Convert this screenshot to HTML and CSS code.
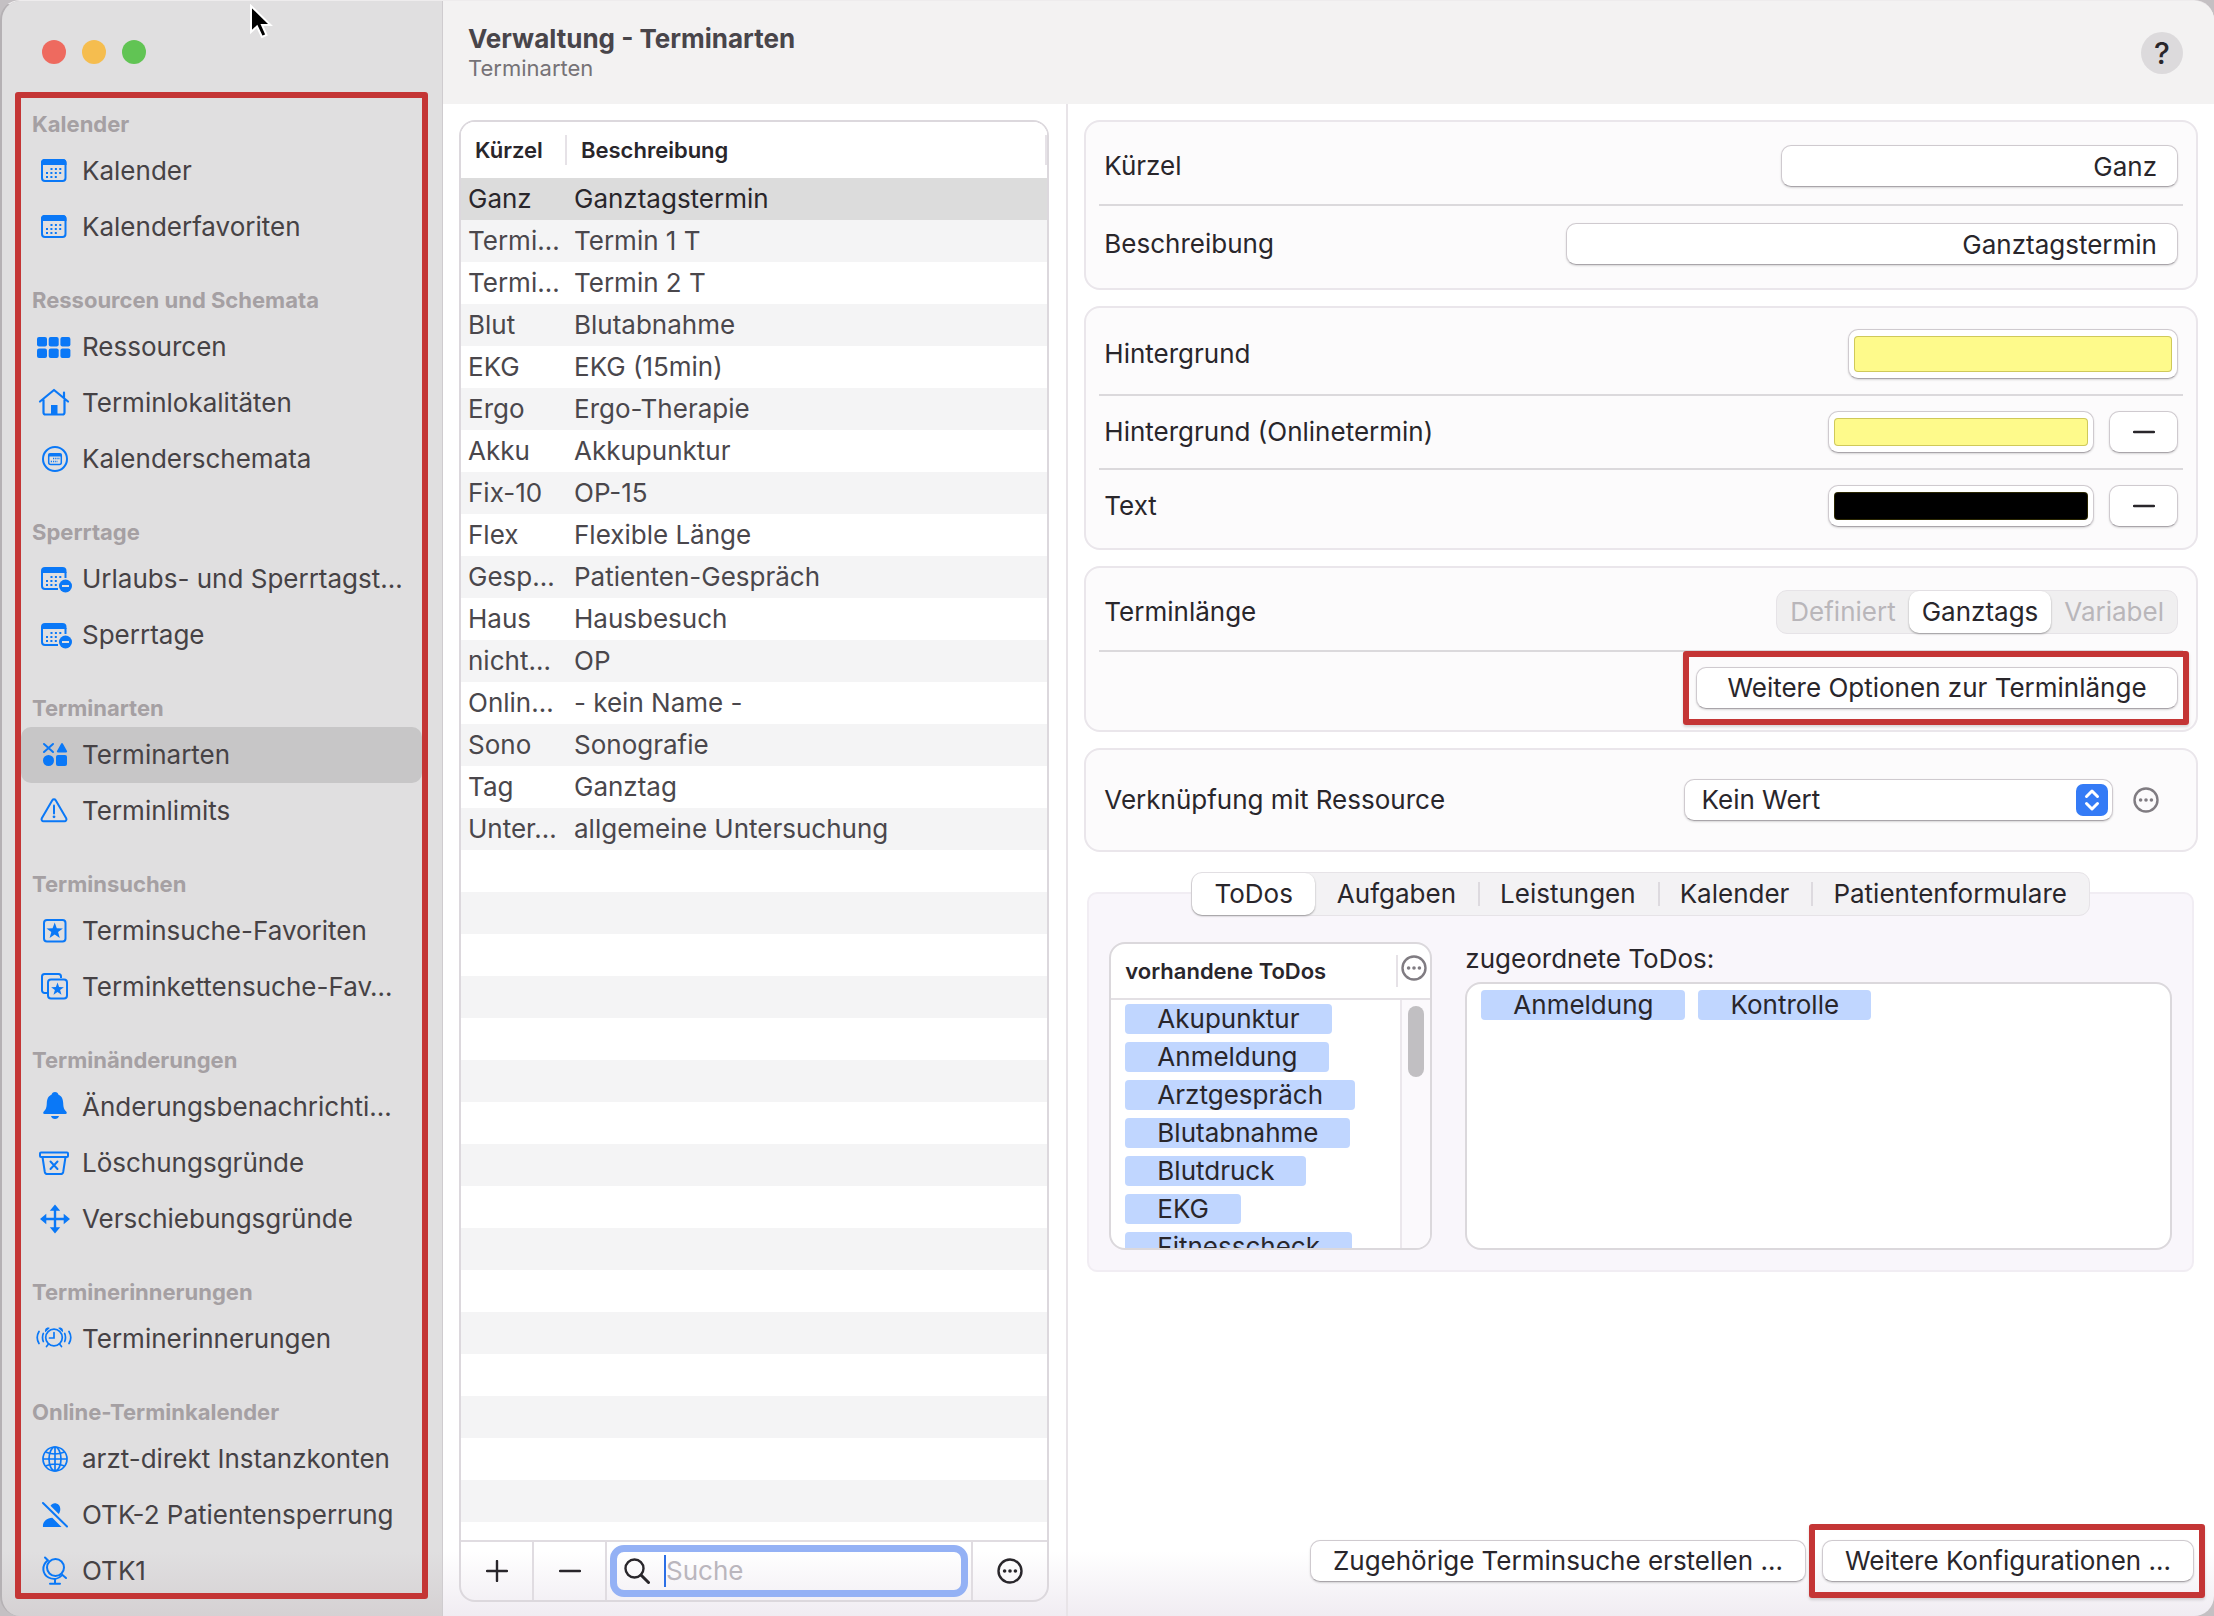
FILE: index.html
```
<!DOCTYPE html>
<html lang="de">
<head>
  <meta charset="UTF-8" />
  <meta name="viewport" content="width=device-width, initial-scale=1.0" />
  <title>Verwaltung - Terminarten</title>
  <link rel="stylesheet" href="styles.css">
</head>
<body>

  <!-- Icons -->
  <svg class="sprite" aria-hidden="true">
    <symbol id="i-dots" viewBox="0 0 26 26">
      <circle cx="13" cy="13" r="11.5" fill="none" stroke="currentColor" stroke-width="2.4"/>
      <g fill="currentColor"><circle cx="7.6" cy="13" r="1.8"/><circle cx="13" cy="13" r="1.8"/><circle cx="18.4" cy="13" r="1.8"/></g>
    </symbol>
    <symbol id="i-minus" viewBox="0 0 22 22">
      <path d="M1 11h20" stroke="currentColor" stroke-width="2.4" stroke-linecap="round"/>
    </symbol>
    <symbol id="i-plus" viewBox="0 0 22 22">
      <path d="M1 11h20M11 1v20" stroke="currentColor" stroke-width="2.4" stroke-linecap="round"/>
    </symbol>
    <symbol id="i-cal" viewBox="0 0 36 30">
      <rect x="6" y="4" width="23.500" height="21" rx="3" fill="none" stroke="currentColor" stroke-width="2"/>
      <path d="M5 9V7a4 4 0 0 1 4-4h17.500a4 4 0 0 1 4 4v2z" fill="currentColor"/>
      <path d="M14.500 13h12M10 17h17M10 21h12" stroke="currentColor" stroke-width="2" stroke-dasharray="2 2.400"/>
    </symbol>
    <symbol id="i-cal-minus" viewBox="0 0 36 30">
      <path d="M22 25H9a3 3 0 0 1-3-3V8M29.500 8v6" fill="none" stroke="currentColor" stroke-width="2"/>
      <path d="M5 9V7a4 4 0 0 1 4-4h17.500a4 4 0 0 1 4 4v2z" fill="currentColor"/>
      <path d="M14.500 13h12M10 17h12M10 21h12" stroke="currentColor" stroke-width="2" stroke-dasharray="2 2.400"/>
      <circle cx="29.500" cy="22" r="6.500" fill="currentColor"/>
      <path d="M26 22h7" stroke="#e0dfe0" stroke-width="2"/>
    </symbol>
    <symbol id="i-grid" viewBox="0 0 36 30">
      <g fill="currentColor">
        <rect x="1" y="5" width="10" height="9.500" rx="2"/><rect x="12.700" y="5" width="10" height="9.500" rx="2"/><rect x="24.400" y="5" width="10" height="9.500" rx="2"/>
        <rect x="1" y="16.500" width="10" height="9.500" rx="2"/><rect x="12.700" y="16.500" width="10" height="9.500" rx="2"/><rect x="24.400" y="16.500" width="10" height="9.500" rx="2"/>
      </g>
    </symbol>
    <symbol id="i-house" viewBox="0 0 36 30">
      <path d="M4 13.500L18 2l14 11.500M28 10V4.500M7.500 12v12.500a2 2 0 0 0 2 2h17a2 2 0 0 0 2-2V12" fill="none" stroke="currentColor" stroke-width="2.200" stroke-linecap="round" stroke-linejoin="round"/>
      <path d="M15 17h6.500v9.500H15z" fill="currentColor"/>
    </symbol>
    <symbol id="i-cal-circle" viewBox="0 0 36 30">
      <circle cx="19" cy="15" r="12" fill="none" stroke="currentColor" stroke-width="2"/>
      <rect x="12.700" y="9.700" width="12.600" height="10.800" rx="2" fill="none" stroke="currentColor" stroke-width="1.500"/>
      <path d="M12.500 11h13" stroke="currentColor" stroke-width="3"/>
      <path d="M17 14.500h7M14.800 17.500h7" stroke="currentColor" stroke-width="1.600" stroke-dasharray="1.200 1"/>
    </symbol>
    <symbol id="i-shapes" viewBox="0 0 36 30">
      <path d="M8 4l9 8M17 4l-9 8" stroke="currentColor" stroke-width="2" stroke-linecap="round"/>
      <g fill="currentColor">
        <path d="M25.200 3.500a1 1 0 0 1 1.600 0l4.200 7.500a1 1 0 0 1-1 1.500h-8a1 1 0 0 1-1-1.500z"/>
        <circle cx="12.500" cy="20.500" r="5.500"/>
        <rect x="20" y="15" width="11" height="11" rx="2"/>
      </g>
    </symbol>
    <symbol id="i-warn" viewBox="0 0 36 30">
      <path d="M16.300 4.200a2 2 0 0 1 3.400 0l10.500 18a2 2 0 0 1-1.700 3h-21a2 2 0 0 1-1.700-3z" fill="none" stroke="currentColor" stroke-width="2"/>
      <path d="M18 9.500v8" stroke="currentColor" stroke-width="2" stroke-linecap="round"/>
      <circle cx="18" cy="20.800" r="1.400" fill="currentColor"/>
    </symbol>
    <symbol id="i-star" viewBox="0 0 36 30">
      <rect x="8" y="4" width="21.500" height="21.500" rx="3" fill="none" stroke="currentColor" stroke-width="2"/>
      <path d="M18.700 6.500l2.100 5.700 6.100.2-4.800 3.700 1.700 5.900-5.100-3.500-5.100 3.500 1.700-5.900-4.800-3.700 6.100-.2z" fill="currentColor"/>
    </symbol>
    <symbol id="i-stars" viewBox="0 0 36 30">
      <path d="M11 21H8.500a2.500 2.500 0 0 1-2.500-2.500v-14A2.500 2.500 0 0 1 8.500 2h14A2.500 2.500 0 0 1 25 4.500V6" fill="none" stroke="currentColor" stroke-width="2"/>
      <rect x="12" y="7.500" width="19" height="19" rx="3" fill="none" stroke="currentColor" stroke-width="2"/>
      <path d="M21.500 10.500l1.600 4.500 4.800.2-3.800 2.900 1.400 4.600-4-2.700-4 2.700 1.400-4.600-3.800-2.900 4.800-.2z" fill="currentColor"/>
    </symbol>
    <symbol id="i-bell" viewBox="0 0 36 30">
      <path d="M19 0c2 0 3 1 3.300 2.500 3.500 1.500 4.700 4.500 4.900 8.500.2 5 1 6.500 3 8.500.8.800 1 2.500-.7 2.500h-21c-1.700 0-1.500-1.700-.7-2.500 2-2 2.800-3.500 3-8.500.2-4 1.400-7 4.900-8.500C16 1 17 0 19 0zM15 24h8c-.5 2-2 3-4 3s-3.500-1-4-3z" fill="currentColor"/>
    </symbol>
    <symbol id="i-bin" viewBox="0 0 36 30">
      <path d="M5 4.500h26a1 1 0 0 1 1 1v2.500a1 1 0 0 1-1 1H5a1 1 0 0 1-1-1V5.500a1 1 0 0 1 1-1zM6.500 9l2.300 15a2.500 2.500 0 0 0 2.500 2h13.400a2.500 2.500 0 0 0 2.500-2L29.500 9" fill="none" stroke="currentColor" stroke-width="2"/>
      <path d="M14.500 13.500l7 7.500M21.500 13.500l-7 7.500" stroke="currentColor" stroke-width="2" stroke-linecap="round"/>
    </symbol>
    <symbol id="i-move" viewBox="0 0 36 30">
      <path d="M19 4v22M8 15h22" stroke="currentColor" stroke-width="2.400"/>
      <path d="M19 .5l5.200 6.300H13.800zM19 29.500l5.200-6.300H13.800zM4 15l6.300-5.200v10.400zM34 15l-6.300-5.200v10.400z" fill="currentColor"/>
    </symbol>
    <symbol id="i-alarm" viewBox="0 0 36 30">
      <g fill="none" stroke="currentColor" stroke-width="1.700" stroke-linecap="round">
        <circle cx="18" cy="13.500" r="8.300"/>
        <path d="M18 8.500v5.500h-4.500M12.500 20l-2 2.500M23.500 20l2 2.500"/>
        <path d="M7.300 9.500q-1.600 4 0 8M3 7.500q-3.600 6 0 12M28.700 9.500q1.600 4 0 8M33 7.500q3.600 6 0 12"/>
      </g>
      <path d="M9.300 8.300c-1.300-3 1.300-5.800 4.500-4.400zM26.700 8.300c1.300-3-1.300-5.800-4.500-4.400z" fill="currentColor"/>
    </symbol>
    <symbol id="i-globe" viewBox="0 0 36 30">
      <g fill="none" stroke="currentColor" stroke-width="1.700">
        <circle cx="19" cy="15" r="12"/><ellipse cx="19" cy="15" rx="6" ry="12"/>
        <path d="M19 3v24M7 15h24M9.500 8q9.500 4 19 0M9.500 22q9.500-4 19 0"/>
      </g>
    </symbol>
    <symbol id="i-user-off" viewBox="0 0 36 30">
      <path d="M14.500 5.800c2.500-4.600 9.800-2.800 9.800 3.200 0 2-.6 3.600-1.600 5zM7 27c-.7-5 3.500-9 9.300-9.300L25.500 27z" fill="currentColor"/>
      <path d="M7 3l24 23.500" stroke="currentColor" stroke-width="2" stroke-linecap="round"/>
    </symbol>
    <symbol id="i-globe-desk" viewBox="0 0 36 30">
      <g fill="none" stroke="currentColor" stroke-width="2" stroke-linecap="round">
        <circle cx="19.500" cy="11.500" r="8.500"/>
        <path d="M9 1.500l2.800 2.800C5 10 6.500 18 12.500 21.500c4.500 2.500 10 1.500 13.800-2.700L30 22M19 23v4M14 27.800h10"/>
      </g>
    </symbol>
  </svg>

  <div class="window">

    <!-- Seitenleiste -->
    <aside class="sidebar">
      <div class="traffic">
        <span class="light red"></span>
        <span class="light yellow"></span>
        <span class="light green"></span>
      </div>
      <nav class="nav">
        <h2>Kalender</h2>
        <a href="#"><svg><use href="#i-cal"/></svg>Kalender</a>
        <a href="#"><svg><use href="#i-cal"/></svg>Kalenderfavoriten</a>
        <h2>Ressourcen und Schemata</h2>
        <a href="#"><svg><use href="#i-grid"/></svg>Ressourcen</a>
        <a href="#"><svg><use href="#i-house"/></svg>Terminlokalitäten</a>
        <a href="#"><svg><use href="#i-cal-circle"/></svg>Kalenderschemata</a>
        <h2>Sperrtage</h2>
        <a href="#"><svg><use href="#i-cal-minus"/></svg>Urlaubs- und Sperrtagst…</a>
        <a href="#"><svg><use href="#i-cal-minus"/></svg>Sperrtage</a>
        <h2>Terminarten</h2>
        <a href="#" class="active"><svg><use href="#i-shapes"/></svg>Terminarten</a>
        <a href="#"><svg><use href="#i-warn"/></svg>Terminlimits</a>
        <h2>Terminsuchen</h2>
        <a href="#"><svg><use href="#i-star"/></svg>Terminsuche-Favoriten</a>
        <a href="#"><svg><use href="#i-stars"/></svg>Terminkettensuche-Fav…</a>
        <h2>Terminänderungen</h2>
        <a href="#"><svg><use href="#i-bell"/></svg>Änderungsbenachrichti…</a>
        <a href="#"><svg><use href="#i-bin"/></svg>Löschungsgründe</a>
        <a href="#"><svg><use href="#i-move"/></svg>Verschiebungsgründe</a>
        <h2>Terminerinnerungen</h2>
        <a href="#"><svg><use href="#i-alarm"/></svg>Terminerinnerungen</a>
        <h2>Online-Terminkalender</h2>
        <a href="#"><svg><use href="#i-globe"/></svg>arzt-direkt Instanzkonten</a>
        <a href="#"><svg><use href="#i-user-off"/></svg>OTK-2 Patientensperrung</a>
        <a href="#"><svg><use href="#i-globe-desk"/></svg>OTK1</a>
      </nav>
    </aside>

    <main class="main">
      <header class="titlebar">
        <div>
          <h1>Verwaltung - Terminarten</h1>
          <p>Terminarten</p>
        </div>
        <button class="help">?</button>
      </header>

      <div class="content">

        <!-- Liste -->
        <section class="list">
          <div class="list-box">
            <div class="rows">
              <table>
                <thead>
                  <tr><th class="col-short"><span>Kürzel</span></th><th><span>Beschreibung</span></th></tr>
                </thead>
                <tbody>
                  <tr class="selected"><td>Ganz</td><td>Ganztagstermin</td></tr>
                  <tr><td>Termi…</td><td>Termin 1 T</td></tr>
                  <tr><td>Termi…</td><td>Termin 2 T</td></tr>
                  <tr><td>Blut</td><td>Blutabnahme</td></tr>
                  <tr><td>EKG</td><td>EKG (15min)</td></tr>
                  <tr><td>Ergo</td><td>Ergo-Therapie</td></tr>
                  <tr><td>Akku</td><td>Akkupunktur</td></tr>
                  <tr><td>Fix-10</td><td>OP-15</td></tr>
                  <tr><td>Flex</td><td>Flexible Länge</td></tr>
                  <tr><td>Gesp…</td><td>Patienten-Gespräch</td></tr>
                  <tr><td>Haus</td><td>Hausbesuch</td></tr>
                  <tr><td>nicht…</td><td>OP</td></tr>
                  <tr><td>Onlin…</td><td>- kein Name -</td></tr>
                  <tr><td>Sono</td><td>Sonografie</td></tr>
                  <tr><td>Tag</td><td>Ganztag</td></tr>
                  <tr><td>Unter…</td><td>allgemeine Untersuchung</td></tr>
                </tbody>
              </table>
            </div>
            <div class="list-footer">
              <button aria-label="Hinzufügen"><svg class="sign"><use href="#i-plus"/></svg></button>
              <button aria-label="Entfernen"><svg class="sign"><use href="#i-minus"/></svg></button>
              <label class="search">
                <svg class="lens" viewBox="0 0 26 26"><circle cx="10.500" cy="10.500" r="9" fill="none" stroke="currentColor" stroke-width="2.400"/><path d="M17 17l7.500 7.500" stroke="currentColor" stroke-width="3" stroke-linecap="round"/></svg>
                <span class="caret"></span>
                <input type="text" placeholder="Suche" aria-label="Suche">
              </label>
              <button class="more" aria-label="Mehr"><svg class="dots"><use href="#i-dots"/></svg></button>
            </div>
          </div>
        </section>

        <!-- Details -->
        <section class="detail">
          <div class="card">
            <div class="row">
              <label for="kuerzel">Kürzel</label>
              <input type="text" id="kuerzel" class="field short" value="Ganz">
            </div>
            <div class="row">
              <label for="beschreibung">Beschreibung</label>
              <input type="text" id="beschreibung" class="field long" value="Ganztagstermin">
            </div>
          </div>

          <div class="card">
            <div class="row tight">
              <label for="bg">Hintergrund</label>
              <input type="color" id="bg" class="color big" value="#fefa8b">
            </div>
            <div class="row tight">
              <label for="bgOnline">Hintergrund (Onlinetermin)</label>
              <input type="color" id="bgOnline" class="color" value="#fefa8b">
              <button class="btn clear" aria-label="Farbe entfernen"><svg class="sign"><use href="#i-minus"/></svg></button>
            </div>
            <div class="row tight">
              <label for="textColor">Text</label>
              <input type="color" id="textColor" class="color" value="#000000">
              <button class="btn clear" aria-label="Farbe entfernen"><svg class="sign"><use href="#i-minus"/></svg></button>
            </div>
          </div>

          <div class="card">
            <div class="row seg-row">
              <span class="row-label">Terminlänge</span>
              <div class="segments">
                <button disabled>Definiert</button>
                <button class="on">Ganztags</button>
                <button disabled>Variabel</button>
              </div>
            </div>
            <div class="row tight end">
              <button class="btn wide marked">Weitere Optionen zur Terminlänge</button>
            </div>
          </div>

          <div class="card">
            <div class="row tall">
              <label for="ressource">Verknüpfung mit Ressource</label>
              <div class="select">
                <select id="ressource"><option>Kein Wert</option></select>
                <svg viewBox="0 0 32 32"><rect width="32" height="32" rx="7" fill="#347bf6"/><path d="M10.500 12.500L16 7l5.500 5.500M10.500 19.500L16 25l5.500-5.500" fill="none" stroke="#fff" stroke-width="3" stroke-linecap="round" stroke-linejoin="round"/></svg>
              </div>
              <button class="more-btn" aria-label="Mehr"><svg class="dots"><use href="#i-dots"/></svg></button>
            </div>
          </div>

          <div class="tab-group">
            <div class="tabs" role="tablist">
              <button role="tab" class="on">ToDos</button>
              <button role="tab">Aufgaben</button>
              <button role="tab">Leistungen</button>
              <button role="tab">Kalender</button>
              <button role="tab">Patientenformulare</button>
            </div>
            <div class="tab-panel">
              <div class="todo-list">
                <div class="todo-head">
                  <h3>vorhandene ToDos</h3>
                  <button class="more-btn" aria-label="Mehr"><svg class="dots"><use href="#i-dots"/></svg></button>
                </div>
                <div class="todo-body">
                  <ul>
                    <li>Akupunktur</li>
                    <li>Anmeldung</li>
                    <li>Arztgespräch</li>
                    <li>Blutabnahme</li>
                    <li>Blutdruck</li>
                    <li>EKG</li>
                    <li>Fitnesscheck</li>
                  </ul>
                  <div class="scroll"><span></span></div>
                </div>
              </div>
              <div class="assigned">
                <p>zugeordnete ToDos:</p>
                <ul>
                  <li>Anmeldung</li>
                  <li>Kontrolle</li>
                </ul>
              </div>
            </div>
          </div>

          <div class="actions">
            <button class="btn">Zugehörige Terminsuche erstellen ...</button>
            <button class="btn marked">Weitere Konfigurationen ...</button>
          </div>
        </section>
      </div>
    </main>
  </div>

  <!-- Mauszeiger -->
  <svg class="cursor" viewBox="0 0 24 36"><path d="M2 2v26l6-5.500L13 33l4.500-2-4.500-10h8.500z" fill="#000" stroke="#fff" stroke-width="2"/></svg>

</body>
</html>
```
FILE: styles.css
```
* {
  box-sizing: border-box;
}

body {
  margin: 0;
  background: #c4c0c3;
  font-family: Inter, "Liberation Sans", sans-serif;
  font-size: 26px;
  line-height: 30px;
  color: #29262b;
}

h1, h2, h3, p, ul {
  margin: 0;
  padding: 0;
}

button, input, select {
  font: inherit;
  color: inherit;
  margin: 0;
}

button {
  background: none;
  border: none;
  padding: 0;
  display: flex;
  align-items: center;
  justify-content: center;
}

.sprite {
  position: absolute;
  width: 0;
  height: 0;
}

.window {
  display: flex;
  height: 100vh;
  border-left: 2px solid #b5b1b4;
  border-top: 1px solid #eeeced;
  border-radius: 20px;
  overflow: hidden;
}

/* Seitenleiste */
.sidebar {
  flex: 0 0 441px;
  display: flex;
  flex-direction: column;
  padding: 0 14px 17px 13px;
  background: linear-gradient(#e0dfe0, #e0dfe0 96%, #d5d1d3);
  border-right: 1px solid #cfcccf;
}

.traffic {
  display: flex;
  gap: 16px;
  height: 91px;
  padding: 39px 0 0 27px;
}

.light {
  width: 24px;
  height: 24px;
  border-radius: 50%;
}

.red { background: #ee6a5f; }
.yellow { background: #f5bd4f; }
.green { background: #61c454; }

.nav {
  flex: 1;
  min-height: 0;
  overflow: hidden;
  border: 6px solid #c43535;
  border-radius: 3px;
}

.nav h2 {
  height: 64px;
  padding: 30px 0 0 11px;
  font-size: 22px;
  font-weight: 700;
  color: #a5a0a3;
}

.nav h2:first-child {
  height: 45px;
  padding-top: 11px;
}

.nav a {
  display: flex;
  align-items: center;
  gap: 10px;
  height: 56px;
  padding-left: 15px;
  border-radius: 10px;
  color: #464245;
  text-decoration: none;
  white-space: nowrap;
}

.nav a.active {
  background: #c7c6c7;
}

.nav svg {
  flex: none;
  width: 36px;
  height: 30px;
  color: #0a78f7;
}

/* Titelleiste */
.main {
  flex: 1;
  min-width: 0;
  display: flex;
  flex-direction: column;
  background: linear-gradient(#fff, #fff 96%, #f0ecf2);
}

.titlebar {
  flex: none;
  display: flex;
  justify-content: space-between;
  align-items: flex-start;
  height: 103px;
  padding: 23px 31px 0 25px;
  background: #f3f2f2;
}

.titlebar h1 {
  font-size: 26px;
  font-weight: 700;
  color: #48454a;
}

.titlebar p {
  font-size: 22px;
  line-height: 28px;
  color: #767276;
}

.help {
  width: 42px;
  height: 42px;
  margin-top: 8px;
  border-radius: 50%;
  background: #dcdadc;
  font-size: 30px;
  font-weight: 500;
}

.content {
  flex: 1;
  min-height: 0;
  display: grid;
  grid-template-columns: minmax(0, 625fr) minmax(0, 1145fr);
}

/* Liste */
.list {
  min-height: 0;
  padding: 16px 17px 14px 16px;
  border-right: 2px solid #e8e4e8;
}

.list-box {
  display: flex;
  flex-direction: column;
  height: 100%;
  border: 2px solid #dcd8dd;
  border-radius: 16px;
  overflow: hidden;
}

.rows {
  flex: 1;
  min-height: 0;
  overflow: hidden;
  /* leere Zeilen laufen bis zum Fuss weiter */
  background: repeating-linear-gradient(#fff 0 42px, #f4f4f5 42px 84px) 0 56px;
}

.rows table {
  width: 100%;
  table-layout: fixed;
  border-collapse: collapse;
}

.rows thead {
  background: #fff;
}

.rows th {
  height: 56px;
  padding: 0;
  text-align: left;
  font-size: 22px;
  font-weight: 600;
}

.rows th span {
  display: block;
  padding-left: 14px;
  border-right: 2px solid #e6e2e7;
}

.col-short {
  width: 106px;
}

.rows td {
  height: 42px;
  padding: 0 0 0 7px;
  color: #4a474c;
  white-space: nowrap;
}

.rows .selected {
  background: #dcdcdc;
}

.rows .selected td {
  color: #29262b;
}

.list-footer {
  flex: none;
  display: flex;
  height: 60px;
  border-top: 2px solid #e0dce1;
}

.list-footer button {
  width: 73px;
  border-right: 2px solid #e0dce1;
}

.list-footer .more {
  width: 76px;
  border-right: none;
  border-left: 2px solid #e0dce1;
}

.sign {
  width: 22px;
  height: 22px;
}

.dots {
  width: 26px;
  height: 26px;
}

.search {
  flex: 1;
  min-width: 0;
  display: flex;
  align-items: center;
  margin: 3px;
  padding-left: 7px;
  border: 7px solid #94b1f5;
  border-radius: 14px;
}

.lens {
  flex: none;
  width: 26px;
  height: 26px;
}

.caret {
  flex: none;
  width: 2px;
  height: 32px;
  margin-left: 14px;
  background: #2c6fe6;
}

.search input {
  flex: 1;
  min-width: 0;
  padding: 0;
  border: none;
  outline: none;
  background: none;
}

.search input::placeholder {
  color: #bab6bd;
}

/* Details */
.detail {
  min-width: 0;
  display: flex;
  flex-direction: column;
  gap: 16px;
  padding: 16px 16px 34px;
}

.card {
  padding: 6px 13px;
  border: 2px solid #eae6eb;
  border-radius: 16px;
  background: #fcfbfc;
}

.row {
  display: flex;
  align-items: center;
  padding: 17px 5px;
}

.row + .row {
  border-top: 2px solid #dbd9dc;
}

.row label,
.row-label {
  margin-right: auto;
}

.row.tight { padding: 15px 5px; }
.row.seg-row { padding: 16px 5px; }
.row.tall { padding: 23px 5px; }
.row.end { justify-content: flex-end; }

.field,
.color,
.btn,
.select select {
  height: 42px;
  border: 1px solid #cfcacf;
  border-bottom-color: #a9a5aa;
  border-radius: 10px;
  background: #fff;
  box-shadow: 0 1px 2px rgba(0, 0, 0, 0.15);
}

.field {
  padding: 0 20px;
  text-align: right;
}

.short { width: 37%; }
.long { width: 57%; }

.color {
  width: 266px;
  padding: 6px 5px;
}

.color.big {
  width: 330px;
  height: 50px;
}

.color::-webkit-color-swatch-wrapper {
  padding: 0;
}

.color::-webkit-color-swatch {
  border: 1px solid rgba(120, 110, 0, 0.35);
  border-radius: 4px;
}

.clear {
  width: 69px;
  margin-left: 15px;
}

.btn {
  padding: 0 22px;
  position: relative;
  white-space: nowrap;
}

.btn.clear {
  padding: 0;
}

.wide {
  width: 482px;
}

/* rote Markierung um wichtige Buttons */
.marked::after {
  content: "";
  position: absolute;
  inset: -17px -12px -17px -14px;
  border: 6px solid #c43535;
  border-radius: 3px;
  box-shadow: 0 2px 3px rgba(0, 0, 0, 0.15);
}

.segments,
.tabs {
  display: flex;
  height: 44px;
  border: 1px solid #e6e3e7;
  border-radius: 11px;
  background: #f0eff0;
}

.segments button {
  padding: 0 13px;
}

.segments button:disabled {
  color: #b9b6ba;
}

.segments .on,
.tabs .on {
  border-radius: 10px;
  background: #fff;
  box-shadow: 0 1px 2px rgba(0, 0, 0, 0.35);
}

.select {
  position: relative;
  width: 40%;
}

.select select {
  width: 100%;
  padding: 0 44px 0 17px;
  appearance: none;
}

.select svg {
  position: absolute;
  top: 5px;
  right: 5px;
  width: 32px;
  height: 32px;
  pointer-events: none;
}

.more-btn {
  color: #807c82;
}

.row .more-btn {
  margin: 0 19px 0 20px;
}

/* Tabs */
.tab-group {
  display: flex;
  flex-direction: column;
  align-items: center;
  margin: 4px 4px 0 3px;
}

.tabs {
  z-index: 1;
  margin-bottom: -24px;
  background: #f3f2f4;
}

.tabs button {
  position: relative;
  padding: 0 22px;
}

.tabs button:nth-child(n+3)::before {
  content: "";
  position: absolute;
  left: 0;
  top: 9px;
  width: 2px;
  height: 24px;
  background: #dddadf;
}

.tab-panel {
  width: 100%;
  display: flex;
  gap: 33px;
  padding: 48px 20px 20px;
  border: 2px solid #f1edf3;
  border-radius: 10px;
  background: #f9f6fb;
}

.todo-list,
.assigned ul {
  border: 2px solid #dbd8dc;
  border-radius: 16px;
  background: #fff;
}

.todo-list {
  flex: 0 0 323px;
  display: flex;
  flex-direction: column;
  height: 308px;
  overflow: hidden;
}

.todo-head {
  flex: none;
  display: flex;
  align-items: center;
  justify-content: space-between;
  height: 56px;
  padding: 0 3px 0 14px;
  border-bottom: 2px solid #e3e0e4;
}

.todo-head h3 {
  font-size: 22px;
  font-weight: 600;
}

.todo-head .more-btn {
  align-items: flex-start;
  height: 32px;
  padding-left: 3px;
  border-left: 2px solid #e6e2e7;
}

.todo-body {
  flex: 1;
  min-height: 0;
  display: flex;
}

.todo-body ul {
  flex: 1;
  padding: 4px 14px;
}

li {
  width: fit-content;
  padding: 0 32px;
  border-radius: 4px;
  background: #c0d6ff;
  list-style: none;
}

.todo-body li {
  margin-bottom: 8px;
}

.scroll {
  width: 30px;
  padding: 6px;
  border-left: 2px solid #ebe7ec;
  background: #fbf9fc;
}

.scroll span {
  display: block;
  width: 16px;
  height: 71px;
  border-radius: 8px;
  background: #c1bfc2;
}

.assigned {
  flex: 1;
  display: flex;
  flex-direction: column;
}

.assigned p {
  height: 40px;
  padding-top: 2px;
}

.assigned ul {
  flex: 1;
  display: flex;
  align-items: flex-start;
  gap: 13px;
  padding: 6px 14px;
}

.actions {
  display: flex;
  justify-content: flex-end;
  gap: 16px;
  margin-top: auto;
  padding-right: 4px;
}

.cursor {
  position: absolute;
  left: 249px;
  top: 4px;
  width: 24px;
  height: 36px;
}
```
